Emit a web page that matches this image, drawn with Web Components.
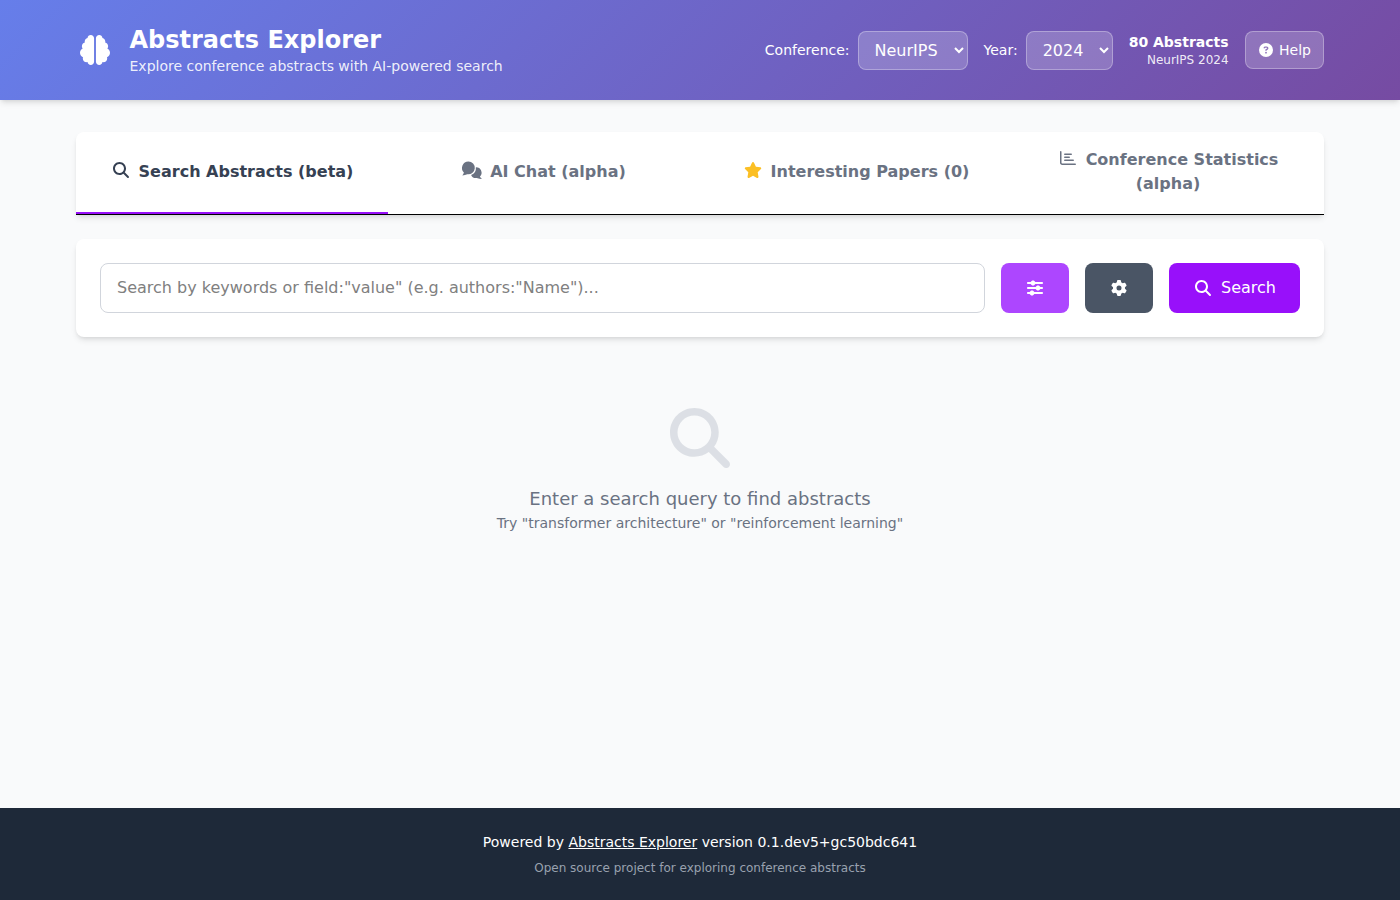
<!DOCTYPE html>
<html lang="en">
<head>
<meta charset="utf-8">
<title>Abstracts Explorer</title>
<style>
  html, body { margin: 0; height: 100%; }
  body {
    display: flex;
    flex-direction: column;
    min-height: 100vh;
    background: #f9fafb;
    font-family: "DejaVu Sans", sans-serif;
    font-size: 16px;
    line-height: 1.5;
  }
  main-view { flex: 1; }
</style>
</head>
<body>
<app-header></app-header>
<main-view>
  <tab-bar>
    <tab-item icon="search" active>Search Abstracts (beta)</tab-item>
    <tab-item icon="comments">AI Chat (alpha)</tab-item>
    <tab-item icon="star" icon-color="#fbbf24">Interesting Papers (0)</tab-item>
    <tab-item icon="chart">Conference Statistics (alpha)</tab-item>
  </tab-bar>
  <search-panel></search-panel>
  <empty-state></empty-state>
</main-view>
<app-footer></app-footer>

<script>
// Font Awesome style glyphs, as [viewBox width, path]
const ICONS = {
  brain: [512, 'M184 0c30.9 0 56 25.1 56 56V456c0 30.9-25.1 56-56 56c-28.9 0-52.7-21.9-55.7-50.1c-5.2 1.4-10.7 2.1-16.3 2.1c-35.3 0-64-28.7-64-64c0-7.4 1.3-14.6 3.6-21.2C21.4 367.4 0 338.2 0 304c0-31.9 18.7-59.5 45.8-72.3C37.1 220.8 32 207 32 192c0-30.7 21.6-56.3 50.4-62.6C80.8 123.9 80 118 80 112c0-29.9 20.6-55.1 48.3-62.1C131.3 21.9 155.1 0 184 0zM328 0c28.9 0 52.6 21.9 55.7 49.9c27.8 7 48.3 32.1 48.3 62.1c0 6-.8 11.9-2.4 17.4c28.8 6.2 50.4 31.9 50.4 62.6c0 15-5.1 28.8-13.8 39.7C493.3 244.5 512 272.1 512 304c0 34.2-21.4 63.4-51.6 74.8c2.3 6.6 3.6 13.8 3.6 21.2c0 35.3-28.7 64-64 64c-5.6 0-11.1-.7-16.3-2.1c-3 28.2-26.8 50.1-55.7 50.1c-30.9 0-56-25.1-56-56V56c0-30.9 25.1-56 56-56z'],
  search: [512, 'M416 208c0 45.9-14.9 88.3-40 122.7L502.6 457.4c12.5 12.5 12.5 32.8 0 45.3s-32.8 12.5-45.3 0L330.7 376c-34.4 25.2-76.8 40-122.7 40C93.1 416 0 322.9 0 208S93.1 0 208 0S416 93.1 416 208zM208 352a144 144 0 1 0 0-288 144 144 0 1 0 0 288z'],
  // two round bubbles, the lower one cut by a gap around the upper one
  comments: [640, 'M205 -15A205 205 0 1 1 169 392Q100 420 10 430Q50 385 60 335A205 205 0 0 1 205 -15ZM443.7 165.1A175 175 0 0 1 574 464Q590 510 640 544Q560 540 471 514A175 175 0 0 1 291.5 413.9A240 240 0 0 0 443.7 165.1Z'],
  star: [576, 'M316.9 18C311.6 7 300.4 0 288.1 0s-23.4 7-28.8 18L195 150.3 51.4 171.5c-12 1.8-22 10.2-25.7 21.7s-.7 24.2 7.9 32.7L137.8 329 113.2 474.7c-2 12 3 24.2 12.9 31.3s23 8 33.8 2.3l128.3-68.5 128.3 68.5c10.8 5.7 23.9 4.9 33.8-2.3s14.9-19.3 12.9-31.3L438.5 329 542.7 225.9c8.6-8.5 11.7-21.2 7.9-32.7s-13.7-19.9-25.7-21.7L381.2 150.3 316.9 18z'],
  chart: [512, 'M24 32c13.3 0 24 10.7 24 24V408c0 13.3 10.7 24 24 24H488c13.3 0 24 10.7 24 24s-10.7 24-24 24H72c-39.8 0-72-32.2-72-72V56C0 42.7 10.7 32 24 32zM128 136c0-13.3 10.7-24 24-24l208 0c13.3 0 24 10.7 24 24s-10.7 24-24 24l-208 0c-13.3 0-24-10.7-24-24zm24 72H296c13.3 0 24 10.7 24 24s-10.7 24-24 24H152c-13.3 0-24-10.7-24-24s10.7-24 24-24zm0 96H424c13.3 0 24 10.7 24 24s-10.7 24-24 24H152c-13.3 0-24-10.7-24-24s10.7-24 24-24z'],
  help: [512, 'M256 512A256 256 0 1 0 256 0a256 256 0 1 0 0 512zM169.8 165.3c7.9-22.3 29.1-37.3 52.8-37.3h58.3c34.9 0 63.1 28.3 63.1 63.1c0 22.6-12.1 43.5-31.7 54.8L280 264.4c-.2 13-10.9 23.6-24 23.6c-13.3 0-24-10.7-24-24V250.5c0-8.6 4.6-16.5 12.1-20.8l44.3-25.4c4.7-2.7 7.6-7.7 7.6-13.1c0-8.4-6.8-15.1-15.1-15.1H222.6c-3.4 0-6.4 2.1-7.5 5.3l-.4 1.2c-4.4 12.5-18.2 19-30.6 14.6s-19-18.2-14.6-30.6l.4-1.2zM224 352a32 32 0 1 1 64 0 32 32 0 1 1 -64 0z'],
  // solid knobs, at this size the reference shows no holes in them
  sliders: [512, 'M0 416c0 17.7 14.3 32 32 32l54.7 0c12.3 28.3 40.5 48 73.3 48s61-19.7 73.3-48L480 448c17.7 0 32-14.3 32-32s-14.3-32-32-32l-246.7 0c-12.3-28.3-40.5-48-73.3-48s-61 19.7-73.3 48L32 384c-17.7 0-32 14.3-32 32zM352 176c-32.8 0-61 19.7-73.3 48L32 224c-17.7 0-32 14.3-32 32s14.3 32 32 32l246.7 0c12.3 28.3 40.5 48 73.3 48s61-19.7 73.3-48l54.7 0c17.7 0 32-14.3 32-32s-14.3-32-32-32l-54.7 0c-12.3-28.3-40.5-48-73.3-48zM265.3 64C253 35.7 224.8 16 192 16s-61 19.7-73.3 48L32 64C14.3 64 0 78.3 0 96s14.3 32 32 32l86.7 0c12.3 28.3 40.5 48 73.3 48s61-19.7 73.3-48L480 128c17.7 0 32-14.3 32-32s-14.3-32-32-32L265.3 64z'],
  gear: [512, 'M495.9 166.6c3.2 8.7 .5 18.4-6.4 24.6l-43.3 39.4c1.1 8.3 1.7 16.8 1.7 25.4s-.6 17.1-1.7 25.4l43.3 39.4c6.9 6.2 9.6 15.9 6.4 24.6c-4.4 11.9-9.7 23.3-15.8 34.3l-4.7 8.1c-6.6 11-14 21.4-22.1 31.2c-5.9 7.2-15.7 9.6-24.5 6.8l-55.7-17.7c-13.4 10.3-28.2 18.9-44 25.4l-12.5 57.1c-2 9.1-9 16.3-18.2 17.8c-13.8 2.3-28 3.5-42.5 3.5s-28.7-1.2-42.5-3.5c-9.2-1.5-16.2-8.7-18.2-17.8l-12.5-57.1c-15.8-6.5-30.6-15.1-44-25.4L83.1 425.9c-8.8 2.8-18.6 .3-24.5-6.8c-8.1-9.8-15.5-20.2-22.1-31.2l-4.7-8.1c-6.1-11-11.4-22.4-15.8-34.3c-3.2-8.7-.5-18.4 6.4-24.6l43.3-39.4C64.6 273.1 64 264.6 64 256s.6-17.1 1.7-25.4L22.4 191.2c-6.9-6.2-9.6-15.9-6.4-24.6c4.4-11.9 9.7-23.3 15.8-34.3l4.7-8.1c6.6-11 14-21.4 22.1-31.2c5.9-7.2 15.7-9.6 24.5-6.8l55.7 17.7c13.4-10.3 28.2-18.9 44-25.4l12.5-57.1c2-9.1 9-16.3 18.2-17.8C227.3 1.2 241.5 0 256 0s28.7 1.2 42.5 3.5c9.2 1.5 16.2 8.7 18.2 17.8l12.5 57.1c15.8 6.5 30.6 15.1 44 25.4l55.7-17.7c8.8-2.8 18.6-.3 24.5 6.8c8.1 9.8 15.5 20.2 22.1 31.2l4.7 8.1c6.1 11 11.4 22.4 15.8 34.3zM256 336a80 80 0 1 0 0-160 80 80 0 1 0 0 160z']
};

// Inline glyph: 1em tall, 1.25em fixed-width box, coloured by currentColor
class FaIcon extends HTMLElement {
  constructor() {
    super();
    this.attachShadow({ mode: 'open' });
  }

  connectedCallback() {
    const [width, path] = ICONS[this.getAttribute('name')];
    this.shadowRoot.innerHTML = `
      <style>
        :host {
          display: inline-flex;
          align-items: center;
          justify-content: center;
          width: 1.25em;
          height: 1em;
          vertical-align: -0.125em;
        }
        svg { height: 1em; display: block; overflow: visible; fill: currentColor; }
      </style>
      <svg viewBox="0 0 ${width} 512"><path d="${path}"></path></svg>
    `;
  }
}

class AppHeader extends HTMLElement {
  constructor() {
    super();
    this.attachShadow({ mode: 'open' });
    this.shadowRoot.innerHTML = `
      <style>
        :host {
          display: block;
          position: relative;
          flex: none;
          color: #fff;
          background: linear-gradient(135deg, #667eea 0%, #764ba2 100%);
          box-shadow: 0 4px 6px -1px rgba(0,0,0,.1), 0 2px 4px -2px rgba(0,0,0,.1);
        }
        .bar {
          box-sizing: border-box;
          max-width: 1280px;
          height: 100px;
          margin: 0 auto;
          padding: 0 16px;
          display: flex;
          align-items: center;
          justify-content: space-between;
        }
        .brand { display: flex; align-items: center; gap: 16px; }
        .brand fa-icon { font-size: 30px; }
        h1 { margin: 0; font-size: 24px; line-height: 32px; font-weight: 700; }
        .tagline { font-size: 14px; line-height: 20px; color: rgba(255,255,255,.9); }
        .controls { display: flex; align-items: center; gap: 16px; }
        .field { display: flex; align-items: center; gap: 8px; font-size: 14px; }
        select {
          box-sizing: border-box;
          height: 39px;
          padding: 8px 0 8px 12px;
          font: 16px "DejaVu Sans", sans-serif;
          color: #fff;
          background: rgba(255,255,255,.2);
          border: 1px solid rgba(255,255,255,.3);
          border-radius: 8px;
        }
        option { color: #111; }
        .stats { text-align: right; }
        .stats b { display: block; font-size: 14px; line-height: 20px; }
        .stats span { display: block; font-size: 12px; line-height: 16px; color: rgba(255,255,255,.9); }
        button {
          box-sizing: border-box;
          height: 38px;
          padding: 0 12px;
          font: 14px "DejaVu Sans", sans-serif;
          color: #fff;
          background: rgba(255,255,255,.2);
          border: 1px solid rgba(255,255,255,.3);
          border-radius: 8px;
          display: flex;
          align-items: center;
          gap: 4px;
        }
      </style>
      <div class="bar">
        <div class="brand">
          <fa-icon name="brain"></fa-icon>
          <div>
            <h1>Abstracts Explorer</h1>
            <div class="tagline">Explore conference abstracts with AI-powered search</div>
          </div>
        </div>
        <div class="controls">
          <label class="field">Conference:
            <select style="width:110px"><option>NeurIPS</option></select>
          </label>
          <label class="field">Year:
            <select style="width:87px"><option>2024</option></select>
          </label>
          <div class="stats"><b>80 Abstracts</b><span>NeurIPS 2024</span></div>
          <button><fa-icon name="help"></fa-icon>Help</button>
        </div>
      </div>
    `;
  }
}

// Centered page column below the header
class MainView extends HTMLElement {
  constructor() {
    super();
    this.attachShadow({ mode: 'open' });
    this.shadowRoot.innerHTML = `
      <style>
        :host {
          display: block;
          box-sizing: border-box;
          width: 100%;
          max-width: 1280px;
          margin: 0 auto;
          padding: 32px 16px 0;
        }
      </style>
      <slot></slot>
    `;
  }
}

class TabBar extends HTMLElement {
  constructor() {
    super();
    this.attachShadow({ mode: 'open' });
    this.shadowRoot.innerHTML = `
      <style>
        :host {
          display: flex;
          background: #fff;
          border-bottom: 1px solid #000;
          border-radius: 8px 8px 0 0;
          box-shadow: 0 4px 6px -1px rgba(0,0,0,.1), 0 2px 4px -2px rgba(0,0,0,.1);
          margin-bottom: 24px;
          overflow: hidden;
        }
      </style>
      <slot></slot>
    `;
  }
}

class TabItem extends HTMLElement {
  constructor() {
    super();
    this.attachShadow({ mode: 'open' });
  }

  connectedCallback() {
    const iconColor = this.getAttribute('icon-color');
    this.shadowRoot.innerHTML = `
      <style>
        :host {
          flex: 1 1 0;
          min-width: 0;
          box-sizing: border-box;
          display: flex;
          align-items: center;
          justify-content: center;
          padding: 16px 24px;
          text-align: center;
          font-size: 16px;
          line-height: 24px;
          font-weight: 700;
          color: #6a7282;
          border-bottom: 2px solid transparent;
        }
        :host([active]) { color: #364153; border-bottom-color: #9810fa; }
        fa-icon { margin-right: 8px; vertical-align: -1px; ${iconColor ? `color: ${iconColor};` : ''} }
      </style>
      <span><fa-icon name="${this.getAttribute('icon')}"></fa-icon><slot></slot></span>
    `;
  }
}

class SearchPanel extends HTMLElement {
  constructor() {
    super();
    this.attachShadow({ mode: 'open' });
    this.shadowRoot.innerHTML = `
      <style>
        :host {
          display: flex;
          gap: 16px;
          padding: 24px;
          background: #fff;
          border-radius: 8px;
          box-shadow: 0 4px 6px -1px rgba(0,0,0,.1), 0 2px 4px -2px rgba(0,0,0,.1);
        }
        input {
          flex: 1;
          min-width: 0;
          box-sizing: border-box;
          height: 50px;
          padding: 0 16px 1px;
          font: 16px "DejaVu Sans", sans-serif;
          border: 1px solid #d1d5dc;
          border-radius: 8px;
          outline: none;
          background: #fff;
        }
        input::placeholder { color: #808080; }
        button {
          height: 50px;
          padding: 0 24px 1px;
          border: 0;
          border-radius: 8px;
          color: #fff;
          font: 16px "DejaVu Sans", sans-serif;
          display: flex;
          align-items: center;
          gap: 8px;
        }
        .filters { background: #ad46ff; }
        .settings { background: #4a5565; }
        .go { background: #9810fa; }
      </style>
      <input type="text" placeholder='Search by keywords or field:"value" (e.g. authors:"Name")...'>
      <button class="filters" title="Filters"><fa-icon name="sliders"></fa-icon></button>
      <button class="settings" title="Settings"><fa-icon name="gear"></fa-icon></button>
      <button class="go"><fa-icon name="search"></fa-icon>Search</button>
    `;
  }
}

class EmptyState extends HTMLElement {
  constructor() {
    super();
    this.attachShadow({ mode: 'open' });
    this.shadowRoot.innerHTML = `
      <style>
        :host {
          display: flex;
          flex-direction: column;
          align-items: center;
          padding-top: 71px;
          color: #6a7282;
          text-align: center;
        }
        svg { width: 60px; height: 60px; fill: #d1d5dc; opacity: .7; display: block; margin-bottom: 17px; }
        .title { font-size: 18px; line-height: 28px; }
        .hint { font-size: 14px; line-height: 20px; }
      </style>
      <svg viewBox="0 0 512 512"><path d="${ICONS.search[1]}"></path></svg>
      <div class="title">Enter a search query to find abstracts</div>
      <div class="hint">Try "transformer architecture" or "reinforcement learning"</div>
    `;
  }
}

class AppFooter extends HTMLElement {
  constructor() {
    super();
    this.attachShadow({ mode: 'open' });
    this.shadowRoot.innerHTML = `
      <style>
        :host {
          display: block;
          flex: none;
          padding: 24px 16px;
          background: #1e2939;
          color: #fff;
          text-align: center;
          font-size: 14px;
          line-height: 20px;
        }
        a { color: inherit; text-decoration: underline; }
        .sub { margin-top: 8px; font-size: 12px; line-height: 16px; color: #99a1af; }
      </style>
      <div>Powered by <a href="#">Abstracts Explorer</a> version 0.1.dev5+gc50bdc641</div>
      <div class="sub">Open source project for exploring conference abstracts</div>
    `;
  }
}

customElements.define('fa-icon', FaIcon);
customElements.define('app-header', AppHeader);
customElements.define('main-view', MainView);
customElements.define('tab-bar', TabBar);
customElements.define('tab-item', TabItem);
customElements.define('search-panel', SearchPanel);
customElements.define('empty-state', EmptyState);
customElements.define('app-footer', AppFooter);
</script>
</body>
</html>
